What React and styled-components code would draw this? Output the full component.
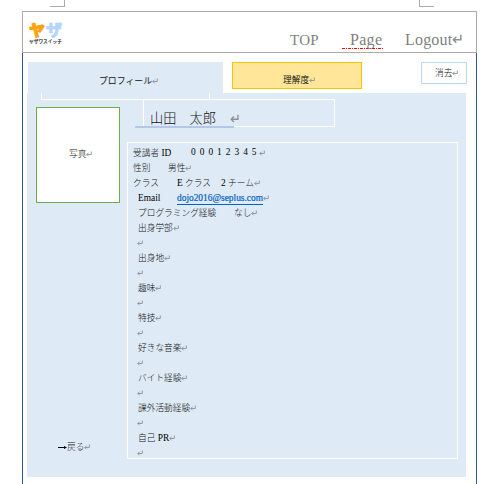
import React from "react";
import styled, { createGlobalStyle } from "styled-components";

const Global = createGlobalStyle`
  * { box-sizing: border-box; }
  body { margin: 0; background: #fff; }
`;

const serif = `"Liberation Serif", "Noto Sans CJK JP", serif`;

const Page = styled.div`
  width: 486px;
  height: 484px;
  overflow: hidden;
  background: #fff;
  color: #111;
  font: 300 8.7px/15px ${serif};
  white-space: pre;
`;

const CropMarks = styled.div`
  display: flex;
  justify-content: space-between;
  width: 384px;
  height: 7px;
  margin: 0 0 4px 50px;
`;

const CropMark = styled.div`
  width: 15px;
  border: 0 solid #aeaaaa;
  border-bottom-width: 1px;
  ${(p) => (p.$side === "left" ? "border-right-width: 1px;" : "border-left-width: 1px;")}
`;

const Header = styled.header`
  display: flex;
  width: 455px;
  height: 42px;
  margin-left: 22px;
  border: 1px solid #aeaaaa;
`;

const Logo = styled.svg`
  display: block;
  overflow: visible;
  width: 40px;
  height: 28px;
  margin: 8px 0 0 5px;
  font-family: "Noto Sans CJK JP", sans-serif;
`;

const Nav = styled.nav`
  display: flex;
  margin: 17px 0 0 222px;
  height: 20px;
  line-height: 22px;
  color: #7f7f7f;
`;

const NavItem = styled.a`
  display: flex;
  align-items: flex-start;
  width: ${(p) => p.$w}px;
  font-size: ${(p) => p.$size}px;
  letter-spacing: ${(p) => p.$track || 0}px;
`;

const Misspelled = styled(NavItem)`
  height: 20px;
  margin-right: 22px;
  padding-left: 8px;
  background: repeating-linear-gradient(90deg, #f00 0 3px, transparent 3px 4px, #f00 4px 5px, transparent 5px 6px) 0 100% / 100% 1px no-repeat;
`;

const Sheet = styled.main`
  width: 455px;
  height: 431px;
  margin-left: 22px;
  padding: 9px 9px 0 4px;
  border: 0 solid #2f5597;
  border-width: 0 1px;
`;

const Tabs = styled.div`
  display: flex;
  align-items: flex-start;
  height: 31px;
  padding-left: 1px;
`;

const Tab = styled.div`
  display: flex;
  align-items: center;
  width: 195px;
  height: 31px;
  padding: 5px 0 0 71px;
  background: #deeaf6;
  font: 400 8.9px/15px "Noto Sans CJK JP", sans-serif;
`;

const QuietTab = styled(Tab)`
  width: 130px;
  height: 27px;
  margin-left: 9px;
  padding: 7px 0 0 50px;
  border: 1px solid #ffc000;
  background: #ffe699;
  font-size: 8.7px;
`;

const DeleteButton = styled.div`
  display: flex;
  align-items: center;
  width: 46px;
  height: 22px;
  margin-left: 59px;
  padding-left: 13px;
  border: 1px solid #bdd7ee;
`;

const Panel = styled.section`
  width: 439px;
  height: 384px;
  background: #deeaf6;
`;

const TabOutline = styled.div`
  width: 169px;
  height: 6px;
  margin-left: 14px;
  border: 0 solid #fff;
  border-width: 0 1px;
`;

const Rule = styled.div`
  width: 294px;
  height: 1px;
  margin-left: 14px;
  background: #fff;
`;

const Columns = styled.div`
  display: flex;
`;

const Side = styled.aside`
  width: 100px;
  padding: 7px 0 0 9px;
`;

const Photo = styled.div`
  display: flex;
  align-items: center;
  width: 84px;
  height: 96px;
  padding: 0 0 2px 32px;
  border: 1px solid #70ad47;
  background: #fff;
`;

const Back = styled.div`
  display: flex;
  align-items: center;
  margin: 237px 0 0 22px;
`;

const Arrow = styled.svg`
  width: 9px;
  height: 7px;
`;

const NameBox = styled.div`
  position: relative;
  display: flex;
  align-items: center;
  width: 192px;
  height: 27px;
  margin-left: 16px;
  padding: 10px 0 0 6px;
  border: 1px solid #fff;
  border-top: 0;
  font-size: 13.2px;

  &::after {
    content: "";
    position: absolute;
    left: -9px;
    bottom: -2px;
    width: 99px;
    height: 2px;
    background: #b4c7e7;
  }
`;

const Info = styled.div`
  width: 331px;
  height: 317px;
  margin-top: 15px;
  padding: 3px 0 0 5px;
  border: 1px solid #fff;
  overflow: hidden;
`;

const Row = styled.div`
  display: flex;
  align-items: center;
  height: 15px;
  padding-left: ${(p) => p.$indent || 0}px;
`;

const Cell = styled.span`
  flex: none;
  height: 15px;
  width: ${(p) => (p.$w ? `${p.$w}px` : "auto")};
`;

const Latin = styled.span`
  color: #000;
  font-size: 9.4px;
  font-weight: 400;
  line-height: 13px;
  letter-spacing: ${(p) => p.$track || 0}px;
`;

const Digits = styled(Latin)`
  height: 15px;
`;

const Mail = styled.a`
  width: 86px;
  height: 12px;
  border-bottom: 1px solid #0563c1;
  color: #0563c1;
  font-size: 9.4px;
  font-weight: 400;
  line-height: 11px;
  -webkit-text-stroke: 0.2px #0563c1;
`;

const ReturnIcon = styled.svg`
  flex: none;
  width: ${(p) => p.$size || 6}px;
  height: ${(p) => p.$size || 6}px;
  margin-left: ${(p) => p.$gap || 0}px;
  margin-top: ${(p) => p.$drop ?? -1}px;
  fill: none;
  stroke: #8d9194;
  stroke-width: 0.9;
`;

const Return = (props) => (
  <ReturnIcon viewBox="0 0 6 6" {...props}>
    <path d="M5.3 .5V3.5H.8M2.6 1.7L.8 3.5L2.6 5.3" />
  </ReturnIcon>
);

const topics = ["出身学部", "出身地", "趣味", "特技", "好きな音楽", "バイト経験", "課外活動経験"];

export default function App() {
  return (
    <Page>
      <Global />
      <CropMarks>
        <CropMark $side="left" />
        <CropMark $side="right" />
      </CropMarks>
      <Header>
        <Logo viewBox="0 0 40 28">
          <text x="1" y="16" fontSize="16" fontWeight="900" fill="#ffa20d" stroke="#ffa20d" strokeWidth="1" strokeLinejoin="round">ヤ</text>
          <text x="18" y="16" fontSize="16" fontWeight="900" fill="#b3d5ff" stroke="#b3d5ff" strokeWidth=".6" strokeLinejoin="round">ザ</text>
          <text x="1" y="23.2" fontSize="4.7" fontWeight="900" fill="#555">ヤザワスイッチ</text>
        </Logo>
        <Nav>
          <NavItem $w={52} $size={15} $track={0.3}>TOP</NavItem>
          <Misspelled $w={41} $size={16} $track={0.3}>Page</Misspelled>
          <NavItem $w={64} $size={16} $track={0.2}>
            Logout<Return $size={10} $drop={5} />
          </NavItem>
        </Nav>
      </Header>
      <Sheet>
        <Tabs>
          <Tab>プロフィール<Return $drop={1} /></Tab>
          <QuietTab>理解度<Return $drop={1} /></QuietTab>
          <DeleteButton>消去<Return /></DeleteButton>
        </Tabs>
        <Panel>
          <TabOutline />
          <Rule />
          <Columns>
            <Side>
              <Photo>写真<Return /></Photo>
              <Back>
                <Arrow viewBox="0 0 9 7">
                  <path d="M0 3.5H7" stroke="#000" />
                  <path d="M6 2L9 3.5L6 5Z" fill="#000" />
                </Arrow>
                戻る<Return />
              </Back>
            </Side>
            <div>
              <NameBox>
                山田　太郎<Return $size={9} $gap={14} $drop={0} />
              </NameBox>
              <Info>
                <Row>
                  <Cell $w={58}>受講者<Latin> ID</Latin></Cell>
                  <Digits $track={4}>00012345</Digits>
                  <Return $gap={-2} />
                </Row>
                <Row><Cell $w={35}>性別</Cell>男性<Return /></Row>
                <Row>
                  <Cell $w={44}>クラス</Cell>
                  <Cell $w={44}><Latin>E </Latin>クラス</Cell>
                  <Cell><Latin>2 </Latin>チーム</Cell>
                  <Return />
                </Row>
                <Row $indent={5}>
                  <Cell $w={39}><Latin>Email</Latin></Cell>
                  <Mail>dojo2016@seplus.com</Mail>
                  <Return />
                </Row>
                <Row $indent={5}><Cell $w={96}>プログラミング経験</Cell>なし<Return /></Row>
                {topics.map((topic) => (
                  <React.Fragment key={topic}>
                    <Row $indent={5}>{topic}<Return /></Row>
                    <Row $indent={4}><Return /></Row>
                  </React.Fragment>
                ))}
                <Row $indent={5}><Cell>自己<Latin> PR</Latin></Cell><Return /></Row>
                <Row $indent={4}><Return /></Row>
              </Info>
            </div>
          </Columns>
        </Panel>
      </Sheet>
    </Page>
  );
}
